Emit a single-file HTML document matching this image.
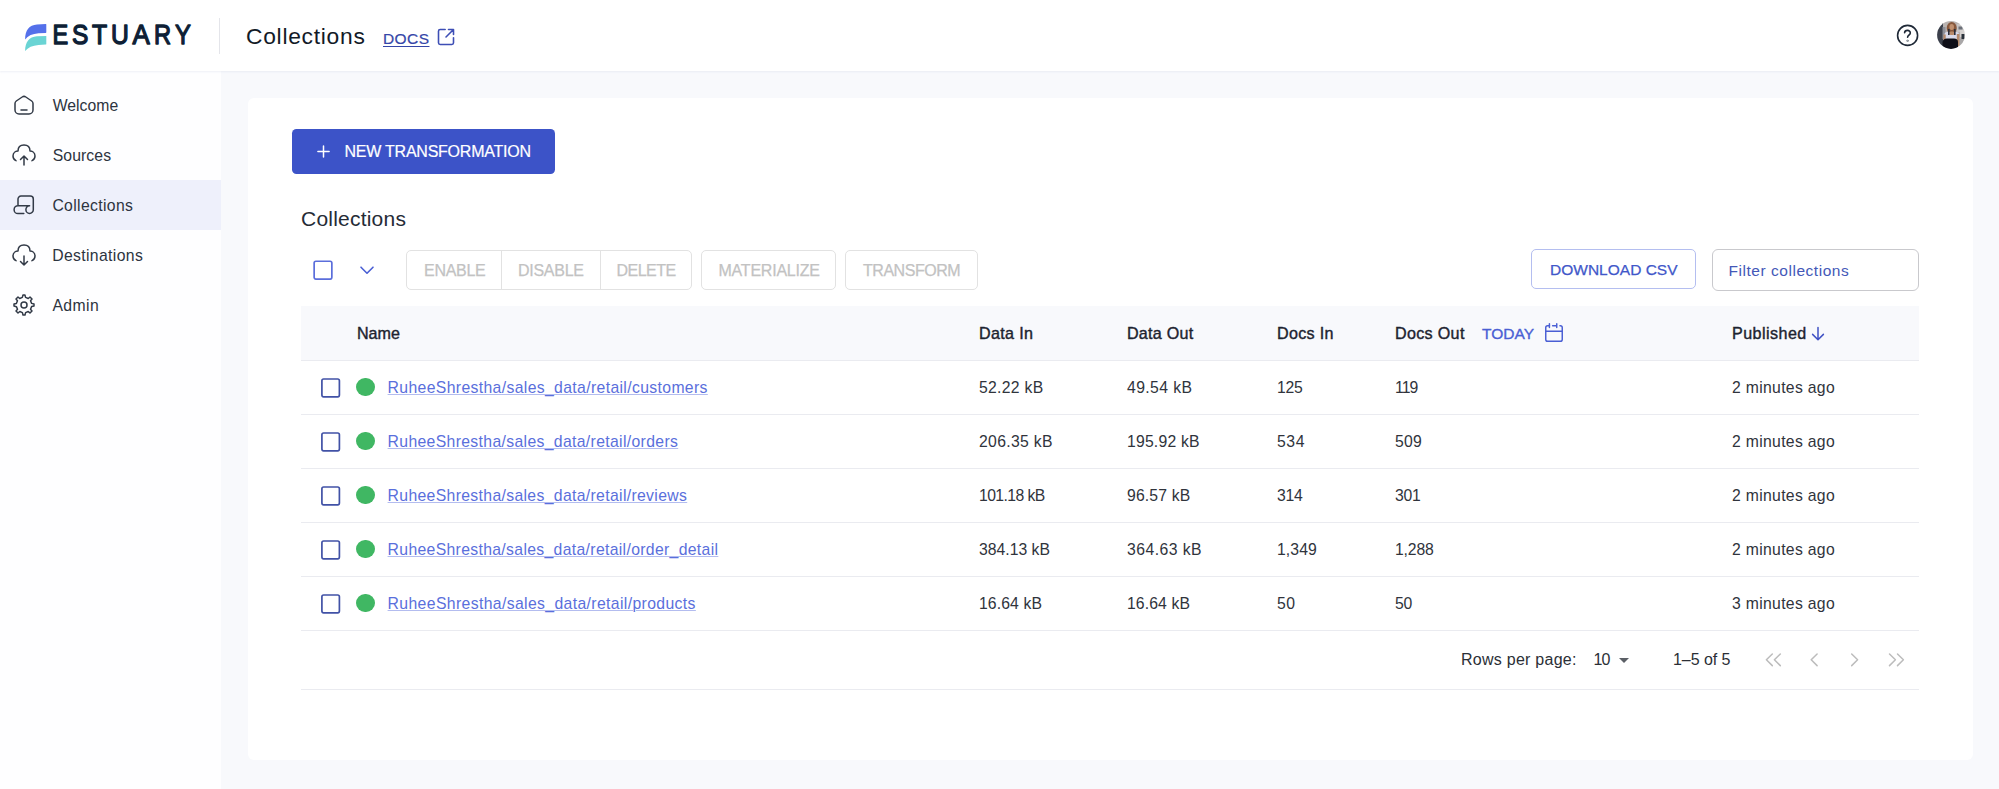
<!DOCTYPE html>
<html><head><meta charset="utf-8">
<style>
*{box-sizing:border-box;margin:0;padding:0}
html,body{width:1999px;height:789px;overflow:hidden;background:#f8f9fc;font-family:"Liberation Sans",sans-serif;color:#1f2937}
.abs{position:absolute}
.t{position:absolute;white-space:nowrap;line-height:1}
#hdr{left:0;top:0;width:1999px;height:71px;background:#fff;box-shadow:0 1px 2px rgba(200,205,225,.3)}
#side{left:0;top:71px;width:221px;height:718px;background:#fefeff}
#sel{left:0;top:180px;width:221px;height:50px;background:#eef0fb}
#card{left:248px;top:98px;width:1725px;height:662px;background:#fff;border-radius:6px}
.nav{font-size:15.75px;color:#2d3440;left:52px}
#btn{left:292px;top:128.5px;width:262.5px;height:45px;background:#3c53c8;border-radius:4.5px}
.gb{position:absolute;top:250px;height:40px;border:1px solid #e2e2e2;border-radius:5px}
.gt{font-size:16px;color:#c2c2c2;top:262.5px;font-weight:400;-webkit-text-stroke:.25px #c2c2c2}
#thead{left:301px;top:306px;width:1618px;height:54px;background:#f8f9fc}
.hl{position:absolute;left:301px;width:1618px;height:1px;background:#eaebf0}
.th{font-size:16.1px;font-weight:400;color:#1d2430;top:325.2px;-webkit-text-stroke:.4px #1d2430}
.td{font-size:15.75px;color:#30343c}
.cb{position:absolute;left:321px;width:19px;height:19px;border:1.6px solid #3f4fa3;border-radius:2.5px}
.dot{position:absolute;left:356.3px;width:18.4px;height:18.4px;border-radius:50%;background:#40b763}
.lk{font-size:15.75px;color:#5a6fdc;text-decoration:underline;text-decoration-color:#b3bcef;text-underline-offset:.8px;text-decoration-thickness:1px;left:388px}
.ft{font-size:16px;color:#2b2f36;top:651.6px}
</style>
<style id="fit">
#title{left:246.00px;letter-spacing:0.730px}
#docs{left:382.30px;letter-spacing:0.419px}
#n1{left:52.70px;letter-spacing:0.018px}
#n2{left:52.70px;letter-spacing:0.099px}
#n3{left:52.40px;letter-spacing:0.344px}
#n4{left:52.20px;letter-spacing:0.355px}
#n5{left:52.40px;letter-spacing:0.429px}
#newt{left:343.80px;letter-spacing:-0.238px}
#sub{left:300.90px;letter-spacing:0.219px}
#g1{left:423.30px;letter-spacing:-0.294px}
#g2{left:517.00px;letter-spacing:-0.269px}
#g3{left:615.40px;letter-spacing:-0.534px}
#g4{left:717.70px;letter-spacing:-0.225px}
#g5{left:862.90px;letter-spacing:-0.462px}
#dl{left:1549.00px;letter-spacing:0.007px}
#flt{left:1727.70px;letter-spacing:0.537px}
#h1{left:356.50px;letter-spacing:-0.026px}
#h2{left:978.30px;letter-spacing:0.344px}
#h3{left:1126.20px;letter-spacing:0.252px}
#h4{left:1276.40px;letter-spacing:0.332px}
#h5{left:1393.80px;letter-spacing:0.328px}
#h6{left:1482.00px;letter-spacing:0.019px}
#h7{left:1731.00px;letter-spacing:0.446px}
#l0{left:387.60px;letter-spacing:0.358px}
#l1{left:387.60px;letter-spacing:0.344px}
#l2{left:387.60px;letter-spacing:0.342px}
#l3{left:387.60px;letter-spacing:0.333px}
#l4{left:387.60px;letter-spacing:0.374px}
#c00{left:980.00px;letter-spacing:0.298px}
#c10{left:980.00px;letter-spacing:0.310px}
#c20{left:978.90px;letter-spacing:-0.578px}
#c30{left:979.90px;letter-spacing:0.010px}
#c40{left:978.90px;letter-spacing:0.105px}
#c01{left:1127.75px;letter-spacing:0.405px}
#c11{left:1126.75px;letter-spacing:0.197px}
#c21{left:1128.20px;letter-spacing:0.148px}
#c31{left:1128.20px;letter-spacing:0.460px}
#c41{left:1127.20px;letter-spacing:0.105px}
#c02{left:1276.80px;letter-spacing:-0.259px}
#c12{left:1277.80px;letter-spacing:0.591px}
#c22{left:1277.80px;letter-spacing:-0.259px}
#c32{left:1276.80px;letter-spacing:0.086px}
#c42{left:1277.80px;letter-spacing:0.441px}
#c03{left:1395.00px;letter-spacing:-0.875px}
#c13{left:1396.00px;letter-spacing:0.241px}
#c23{left:1396.00px;letter-spacing:-0.259px}
#c33{left:1395.00px;letter-spacing:-0.164px}
#c43{left:1396.00px;letter-spacing:-0.359px}
#f1{left:1460.40px;letter-spacing:0.260px}
#f2{left:1592.80px;letter-spacing:-0.998px}
#f3{left:1672.40px;letter-spacing:-0.047px}
#c04{left:1732.50px;letter-spacing:0.310px}
#c14{left:1732.50px;letter-spacing:0.310px}
#c24{left:1732.50px;letter-spacing:0.310px}
#c34{left:1732.50px;letter-spacing:0.310px}
#c44{left:1732.50px;letter-spacing:0.310px}
</style></head><body>
<div id="side" class="abs"></div>
<div id="hdr" class="abs"></div>
<div id="sel" class="abs"></div>
<div id="card" class="abs"></div>

<!-- header -->
<svg class="abs" style="left:24px;top:23px" width="24" height="30" viewBox="0 0 24 30">
<path d="M22.300 1.200V9.300Q22.300 9.900 21.700 9.900L14.500 10.200C8.500 10.700 4 12.600 1.100 16.400C1.300 7 5 1.900 13 1.400L21.700 1.100Q22.300 1.100 22.300 1.200Z" fill="#5470ea"/>
<path d="M22.300 13V21Q22.300 21.600 21.700 21.600L14.500 21.900C8.500 22.400 4 24.300 1.100 28.100C1.300 19 5 14 13 13.300L22.300 12.900Z" fill="#6ad4d4"/>
</svg>
<svg id="logosvg" class="abs" style="left:0;top:0" width="220" height="70" viewBox="0 0 220 70" font-family="Liberation Sans, sans-serif" font-size="27.9" fill="#0e1f36" stroke="#0e1f36" stroke-width="1.35" stroke-linejoin="round"><text transform="translate(52.54 44.0) scale(0.844 1)">E</text><text transform="translate(72.08 44.0) scale(0.879 1)">S</text><text transform="translate(91.94 44.0) scale(0.888 1)">T</text><text transform="translate(110.89 44.0) scale(0.884 1)">U</text><text transform="translate(132.38 44.0) scale(0.927 1)">A</text><text transform="translate(153.93 44.0) scale(0.848 1)">R</text><text transform="translate(175.05 44.0) scale(0.854 1)">Y</text></svg>
<div class="abs" style="left:219px;top:18px;width:1px;height:36px;background:#e4e5ea"></div>
<div class="t" id="title" style="left:246px;top:24.8px;font-size:22.8px;color:#121a27">Collections</div>
<div class="t" id="docs" style="left:383px;top:31px;font-size:15.5px;color:#3546a8;-webkit-text-stroke:.2px #3546a8;text-decoration:underline;text-underline-offset:2px">DOCS</div>
<svg class="abs" style="left:436px;top:27.100px" width="20" height="20" viewBox="0 0 24 24" fill="none" stroke="#3d4eb5" stroke-width="1.900" stroke-linecap="round" stroke-linejoin="round"><path d="M21 3H15M21 3L12 12M21 3V9"/><path d="M21 13V19C21 20.1046 20.1046 21 19 21H5C3.89543 21 3 20.1046 3 19V5C3 3.89543 3.89543 3 5 3H11"/></svg>
<svg class="abs" style="left:1896px;top:24px" width="23" height="23" viewBox="0 0 23 23" fill="none" stroke="#1f2937" stroke-width="1.6" stroke-linecap="round" stroke-linejoin="round">
<circle cx="11.6" cy="11.4" r="10"/><path d="M8.600 8.800C8.800 5.400 14.400 5.600 14.300 8.900C14.200 11 11.700 11.200 11.600 13.200"/><circle cx="11.600" cy="16.700" r=".25"/></svg>
<svg class="abs" style="left:1937px;top:21.2px" width="28" height="28" viewBox="0 0 28 28">
<defs><clipPath id="av"><circle cx="14" cy="14" r="13.9"/></clipPath><filter id="bl" x="-10%" y="-10%" width="120%" height="120%"><feGaussianBlur stdDeviation="0.7"/></filter></defs>
<g clip-path="url(#av)"><g filter="url(#bl)">
<rect x="-2" y="-2" width="32" height="32" fill="#b9b3b1"/>
<rect x="-2" y="2" width="8" height="24" fill="#3a3f4b"/>
<rect x="5.500" y="6" width="3" height="12" fill="#8d8f98"/>
<rect x="20" y="3" width="9" height="8" fill="#c9c6c6"/>
<rect x="21.500" y="5.500" width="4" height="3" fill="#6c7079"/>
<rect x="23" y="9" width="5" height="7" fill="#d6d2d0"/>
<rect x="24.500" y="13" width="3" height="5" fill="#2c303a"/>
<rect x="22" y="18" width="6" height="6" fill="#a9a7a8"/>
<ellipse cx="14.700" cy="7" rx="5" ry="6" fill="#87583c"/>
<ellipse cx="14.700" cy="6" rx="2.300" ry="3" fill="#c0906f"/>
<rect x="7.500" y="11" width="14.500" height="8" rx="2.500" fill="#d8daea"/>
<rect x="12.300" y="10.500" width="5" height="3.500" rx="1.500" fill="#b98b6b"/>
<rect x="6.500" y="13.500" width="2.200" height="6" fill="#b48a6c"/>
<rect x="19.800" y="13" width="2.600" height="12" fill="#b48a6c"/>
<rect x="11" y="8" width="1.600" height="6" fill="#2b2f3a"/>
<rect x="17" y="8" width="1.600" height="6" fill="#2b2f3a"/>
<path d="M5.500 29V21Q6 17.500 10 17.500H17Q21 17.500 21 21V29Z" fill="#0c0e14"/>
</g></g></svg>
<!-- sidebar -->
<div class="t nav" id="n1" style="top:97.8px">Welcome</div>
<div class="t nav" id="n2" style="top:147.8px">Sources</div>
<div class="t nav" id="n3" style="top:197.8px">Collections</div>
<div class="t nav" id="n4" style="top:247.8px">Destinations</div>
<div class="t nav" id="n5" style="top:297.8px">Admin</div>
<svg class="abs" style="left:11.5px;top:92.6px" width="24" height="24" viewBox="0 0 24 24" fill="none" stroke="#323a47" stroke-width="1.5" stroke-linecap="round" stroke-linejoin="round"><path d="M9 17H15"/><path d="M3 10.6V17A4 4 0 0 0 7 21H17A4 4 0 0 0 21 17V10.6A3.2 3.2 0 0 0 19.7 8L13.8 4A3.2 3.2 0 0 0 10.2 4L4.3 8A3.2 3.2 0 0 0 3 10.600Z"/></svg>
<svg class="abs" style="left:11.5px;top:142.8px" width="24" height="24" viewBox="0 0 24 24" fill="none" stroke="#323a47" stroke-width="1.5" stroke-linecap="round" stroke-linejoin="round"><path d="M12 22V13M12 13L15.5 16.5M12 13L8.5 16.5"/><path d="M20 17.6073C21.4937 17.0221 23 15.6889 23 13C23 9 19.6667 8 18 8C18 6 18 2 12 2C6 2 6 6 6 8C4.33333 8 1 9 1 13C1 15.6889 2.50628 17.0221 4 17.6073"/></svg>
<svg class="abs" style="left:11.5px;top:192.8px" width="24" height="24" viewBox="0 0 24 24" fill="none" stroke="#323a47" stroke-width="1.5" stroke-linecap="round" stroke-linejoin="round"><path d="M6 12.700V6.100A3 3 0 0 1 9 3.100H18.300A3 3 0 0 1 21.300 6.100V16.700A3.700 3.700 0 0 1 17.600 20.400A3.700 3.700 0 0 1 13.900 16.700A3.900 3.900 0 0 1 17.600 12.700H6A3.950 3.950 0 0 0 2.100 16.650A3.950 3.950 0 0 0 6 20.600H11.800"/></svg>
<svg class="abs" style="left:11.5px;top:242.8px" width="24" height="24" viewBox="0 0 24 24" fill="none" stroke="#323a47" stroke-width="1.5" stroke-linecap="round" stroke-linejoin="round"><path d="M12 13V22M12 22L15.5 18.5M12 22L8.5 18.5"/><path d="M20 17.6073C21.4937 17.0221 23 15.6889 23 13C23 9 19.6667 8 18 8C18 6 18 2 12 2C6 2 6 6 6 8C4.33333 8 1 9 1 13C1 15.6889 2.50628 17.0221 4 17.6073"/></svg>
<svg class="abs" style="left:11.5px;top:292.8px" width="24" height="24" viewBox="0 0 24 24" fill="none" stroke="#323a47" stroke-width="1.5" stroke-linecap="round" stroke-linejoin="round"><path d="M12 15C13.6569 15 15 13.6569 15 12C15 10.3431 13.6569 9 12 9C10.3431 9 9 10.3431 9 12C9 13.6569 10.3431 15 12 15Z"/><path d="M19.6224 10.3954L18.5247 7.7448L20 6L18 4L16.2647 5.48295L13.5578 4.36974L12.9353 2H10.981L10.3491 4.40113L7.70441 5.51596L6 4L4 6L5.45337 7.78885L4.3725 10.4463L2 11V13L4.40111 13.6555L5.51575 16.2997L4 18L6 20L7.79116 18.5403L10.397 19.6123L11 22H13L13.6045 19.6132L16.2551 18.5155C16.6969 18.8313 18 20 18 20L20 18L18.5159 16.2494L19.6139 13.598L21.9999 12.9772L22 11L19.6224 10.3954Z"/></svg>

<!-- button -->
<div id="btn" class="abs"></div>
<svg class="abs" style="left:316px;top:144px" width="15" height="15" viewBox="0 0 15 15" stroke="#fff" stroke-width="1.5" stroke-linecap="round"><path d="M7.500 1.900V13.100M1.900 7.500H13.100"/></svg>
<div class="t" id="newt" style="left:344.5px;top:144px;font-size:16px;color:#fff;font-weight:400;-webkit-text-stroke:.2px #fff">NEW TRANSFORMATION</div>
<div class="t" id="sub" style="left:301px;top:208.2px;font-size:21px;color:#252b36">Collections</div>

<!-- toolbar -->
<svg class="abs" style="left:312px;top:259px" width="23" height="23" fill="none" stroke="#5b6edb" stroke-width="1.700"><rect x="2.150" y="2.250" width="17.700" height="17.800" rx="1.700"/></svg>
<svg class="abs" style="left:358px;top:263px" width="18" height="14" viewBox="0 0 18 14" fill="none" stroke="#4a5fd4" stroke-width="1.6" stroke-linecap="round" stroke-linejoin="round"><path d="M3 4.2L9 10.2L15 4.2"/></svg>
<div class="gb" style="left:406px;width:286px"></div>
<div class="abs" style="left:501px;top:250px;width:1px;height:40px;background:#e2e2e2"></div>
<div class="abs" style="left:599.5px;top:250px;width:1px;height:40px;background:#e2e2e2"></div>
<div class="gb" style="left:701px;width:135px"></div>
<div class="gb" style="left:845px;width:133px"></div>
<div class="t gt" id="g1" style="left:424px">ENABLE</div>
<div class="t gt" id="g2" style="left:518px">DISABLE</div>
<div class="t gt" id="g3" style="left:616.5px">DELETE</div>
<div class="t gt" id="g4" style="left:718.5px">MATERIALIZE</div>
<div class="t gt" id="g5" style="left:863px">TRANSFORM</div>
<div class="abs" style="left:1531px;top:249px;width:165px;height:40px;border:1px solid #b4bef0;border-radius:5px"></div>
<div class="t" id="dl" style="left:1550px;top:262.3px;font-size:15.5px;color:#4157c9;-webkit-text-stroke:.25px #4157c9">DOWNLOAD CSV</div>
<div class="abs" style="left:1712px;top:249px;width:207px;height:42px;border:1px solid #c9c9cd;border-radius:6px"></div>
<div class="t" id="flt" style="left:1728.5px;top:263.4px;font-size:15.5px;color:#4458b8">Filter collections</div>

<!-- table -->
<div id="thead" class="abs"></div>
<div class="hl" style="top:360px"></div>
<div class="hl" style="top:414px"></div>
<div class="hl" style="top:468px"></div>
<div class="hl" style="top:522px"></div>
<div class="hl" style="top:576px"></div>
<div class="hl" style="top:630px"></div>
<div class="hl" style="top:689px"></div>
<div class="t th" id="h1" style="left:357px">Name</div>
<div class="t th" id="h2" style="left:979px">Data In</div>
<div class="t th" id="h3" style="left:1127px">Data Out</div>
<div class="t th" id="h4" style="left:1277px">Docs In</div>
<div class="t th" id="h5" style="left:1395px">Docs Out</div>
<div class="t" id="h6" style="left:1482px;top:325.8px;font-size:15.5px;color:#4a5fd4;-webkit-text-stroke:.35px #4a5fd4">TODAY</div>
<svg class="abs" style="left:1543px;top:321.6px" width="22" height="22" viewBox="0 0 24 24" fill="none" stroke="#4a5fd4" stroke-width="1.6" stroke-linecap="round" stroke-linejoin="round">
<path d="M15 4V2M15 4V6M15 4H10.5M3 10V19C3 20.1046 3.89543 21 5 21H19C20.1046 21 21 20.1046 21 19V10H3Z"/><path d="M3 10V6C3 4.89543 3.89543 4 5 4H7"/><path d="M7 2V6"/><path d="M21 10V6C21 4.89543 20.1046 4 19 4H18.5"/></svg>
<div class="t th" id="h7" style="left:1732px">Published</div>
<svg class="abs" style="left:1810px;top:325px" width="16" height="17" viewBox="0 0 16 17" fill="none" stroke="#3f51c4" stroke-width="1.5" stroke-linecap="round" stroke-linejoin="round"><path d="M8 2.600V14.600M2.600 9.400L8 14.800L13.400 9.400"/></svg>
<!--rows-->
<svg class="abs" style="left:320px;top:376.6px" width="23" height="23" fill="none" stroke="#4152a6" stroke-width="1.700"><rect x="1.900" y="2" width="17.500" height="17.800" rx="1.700"/></svg><div class="dot" style="top:377.8px"></div>
<div class="t lk" id="l0" style="top:379.9px">RuheeShrestha/sales_data/retail/customers</div>
<div class="t td" id="c00" style="left:979px;top:379.9px">52.22 kB</div>
<div class="t td" id="c01" style="left:1127px;top:379.9px">49.54 kB</div>
<div class="t td" id="c02" style="left:1277px;top:379.9px">125</div>
<div class="t td" id="c03" style="left:1395px;top:379.9px">119</div>
<div class="t td" id="c04" style="left:1732px;top:379.9px">2 minutes ago</div>
<svg class="abs" style="left:320px;top:430.6px" width="23" height="23" fill="none" stroke="#4152a6" stroke-width="1.700"><rect x="1.900" y="2" width="17.500" height="17.800" rx="1.700"/></svg><div class="dot" style="top:431.8px"></div>
<div class="t lk" id="l1" style="top:433.9px">RuheeShrestha/sales_data/retail/orders</div>
<div class="t td" id="c10" style="left:979px;top:433.9px">206.35 kB</div>
<div class="t td" id="c11" style="left:1127px;top:433.9px">195.92 kB</div>
<div class="t td" id="c12" style="left:1277px;top:433.9px">534</div>
<div class="t td" id="c13" style="left:1395px;top:433.9px">509</div>
<div class="t td" id="c14" style="left:1732px;top:433.9px">2 minutes ago</div>
<svg class="abs" style="left:320px;top:484.6px" width="23" height="23" fill="none" stroke="#4152a6" stroke-width="1.700"><rect x="1.900" y="2" width="17.500" height="17.800" rx="1.700"/></svg><div class="dot" style="top:485.8px"></div>
<div class="t lk" id="l2" style="top:487.9px">RuheeShrestha/sales_data/retail/reviews</div>
<div class="t td" id="c20" style="left:979px;top:487.9px">101.18 kB</div>
<div class="t td" id="c21" style="left:1127px;top:487.9px">96.57 kB</div>
<div class="t td" id="c22" style="left:1277px;top:487.9px">314</div>
<div class="t td" id="c23" style="left:1395px;top:487.9px">301</div>
<div class="t td" id="c24" style="left:1732px;top:487.9px">2 minutes ago</div>
<svg class="abs" style="left:320px;top:538.6px" width="23" height="23" fill="none" stroke="#4152a6" stroke-width="1.700"><rect x="1.900" y="2" width="17.500" height="17.800" rx="1.700"/></svg><div class="dot" style="top:539.8px"></div>
<div class="t lk" id="l3" style="top:541.9px">RuheeShrestha/sales_data/retail/order_detail</div>
<div class="t td" id="c30" style="left:979px;top:541.9px">384.13 kB</div>
<div class="t td" id="c31" style="left:1127px;top:541.9px">364.63 kB</div>
<div class="t td" id="c32" style="left:1277px;top:541.9px">1,349</div>
<div class="t td" id="c33" style="left:1395px;top:541.9px">1,288</div>
<div class="t td" id="c34" style="left:1732px;top:541.9px">2 minutes ago</div>
<svg class="abs" style="left:320px;top:592.6px" width="23" height="23" fill="none" stroke="#4152a6" stroke-width="1.700"><rect x="1.900" y="2" width="17.500" height="17.800" rx="1.700"/></svg><div class="dot" style="top:593.8px"></div>
<div class="t lk" id="l4" style="top:595.9px">RuheeShrestha/sales_data/retail/products</div>
<div class="t td" id="c40" style="left:979px;top:595.9px">16.64 kB</div>
<div class="t td" id="c41" style="left:1127px;top:595.9px">16.64 kB</div>
<div class="t td" id="c42" style="left:1277px;top:595.9px">50</div>
<div class="t td" id="c43" style="left:1395px;top:595.9px">50</div>
<div class="t td" id="c44" style="left:1732px;top:595.9px">3 minutes ago</div>
<!--/rows-->

<!-- footer -->
<div class="t ft" id="f1" style="left:1461px">Rows per page:</div>
<div class="t ft" id="f2" style="left:1593.5px">10</div>
<div class="abs" style="left:1618.5px;top:657.5px;width:0;height:0;border-left:5.500px solid transparent;border-right:5.500px solid transparent;border-top:5.500px solid #5b5f66"></div>
<div class="t ft" id="f3" style="left:1673px">1–5 of 5</div>
<svg class="abs" style="left:1760px;top:648px" width="150" height="24" viewBox="0 0 150 24" fill="none" stroke="#bcbcbc" stroke-width="1.5" stroke-linecap="round" stroke-linejoin="round">
<path d="M12.300 6L6.400 11.800L12.300 17.600M20.300 6L14.400 11.800L20.300 17.600"/>
<path d="M57.100 6L51.200 11.800L57.100 17.600"/>
<path d="M91.700 6L97.600 11.800L91.700 17.600"/>
<path d="M129.500 6L135.400 11.800L129.500 17.600M137.500 6L143.400 11.800L137.500 17.600"/></svg>
</body></html>
